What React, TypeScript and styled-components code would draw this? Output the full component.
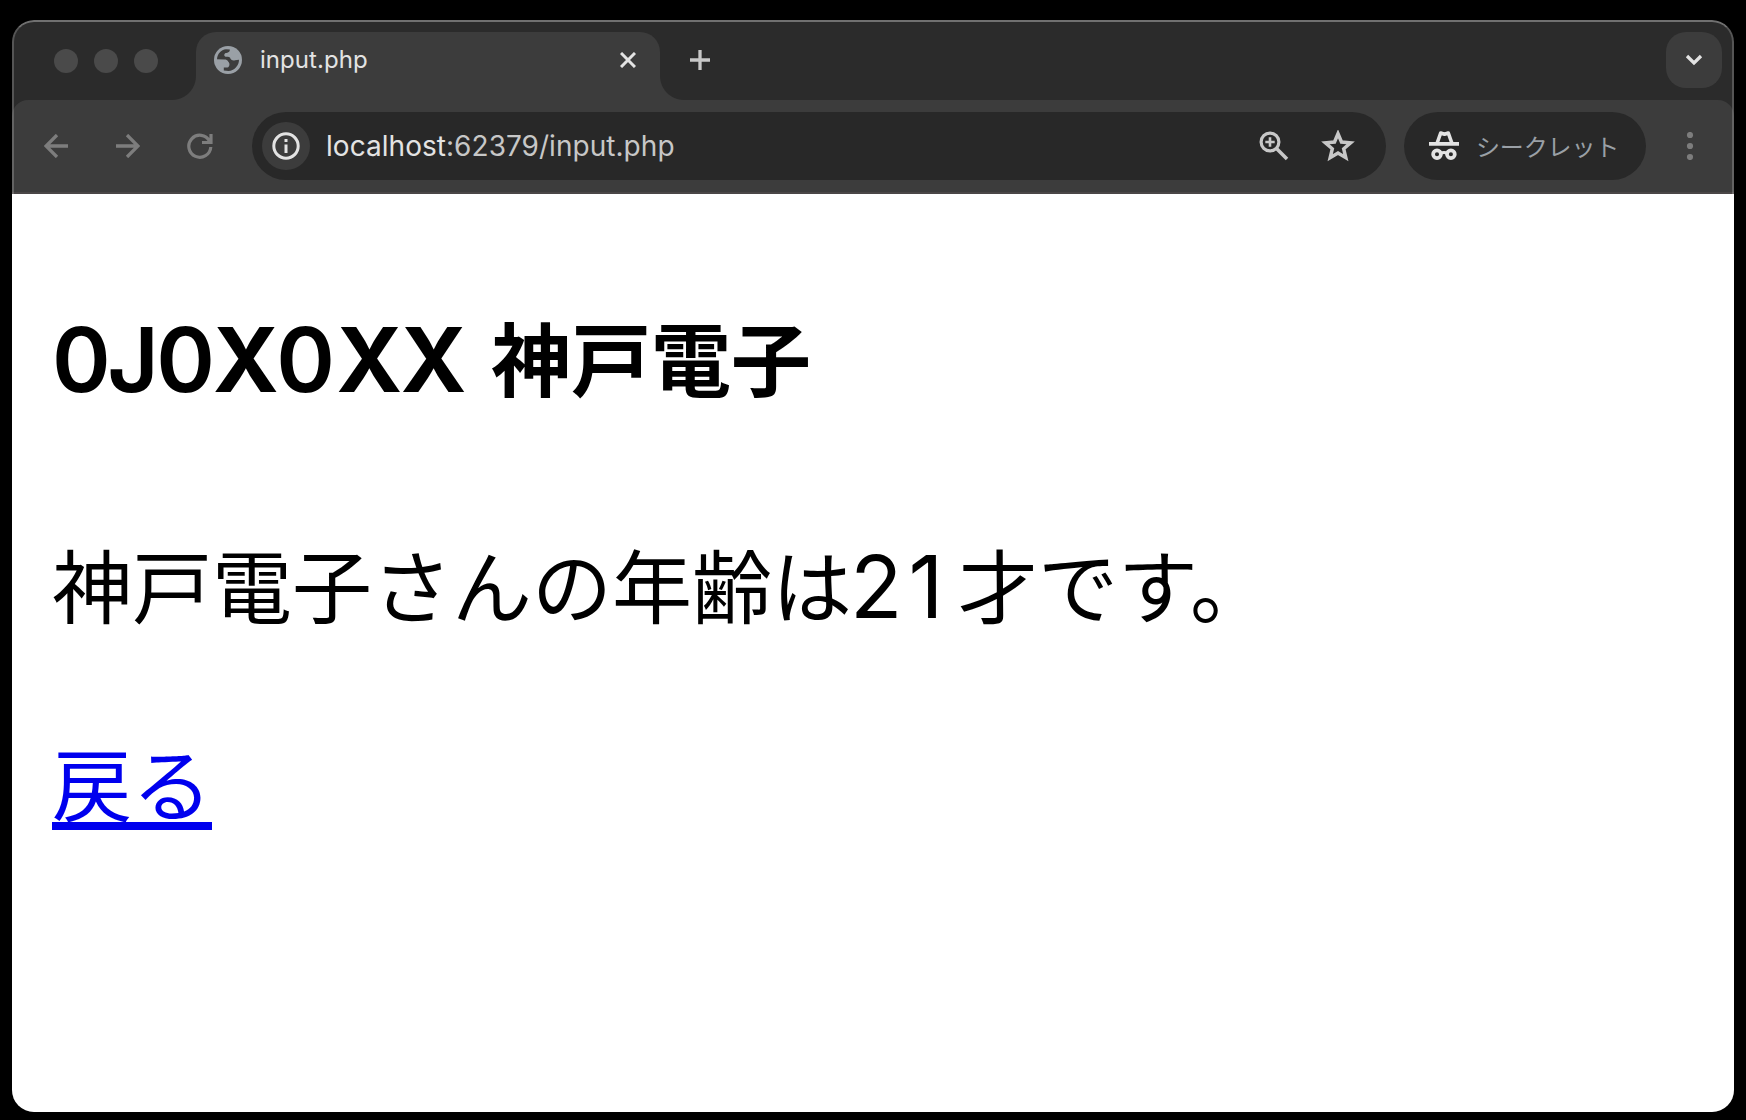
import React from "react";
import styled, { createGlobalStyle } from "styled-components";

const Global = createGlobalStyle`
  * { box-sizing: border-box; }
  html, body { margin: 0; background: #000; }
  svg { display: block; flex: none; }
`;

const Desktop = styled.div`
  width: 1746px;
  height: 1120px;
  padding: 20px 12px 8px;
  background: #000;
  font-family: Inter, "Noto Sans CJK JP", sans-serif;
`;

const Window = styled.div`
  position: relative;
  width: 100%;
  height: 100%;
  display: flex;
  flex-direction: column;
  border-radius: 22px;
  overflow: hidden;
  background: #2b2b2b;
`;

const Rim = styled.div`
  position: absolute;
  inset: 0 0 auto 0;
  height: 174px;
  border: 2px solid rgba(255, 255, 255, 0.2);
  border-top-color: rgba(255, 255, 255, 0.33);
  border-bottom: 0;
  border-radius: 22px 22px 0 0;
  pointer-events: none;
`;

const TabStrip = styled.div`
  height: 80px;
  flex: none;
  display: flex;
  padding: 12px 12px 0 42px;
`;

const Lights = styled.div`
  display: flex;
  gap: 16px;
  padding-top: 17px;
  width: 142px;
`;

const Light = styled.span`
  width: 24px;
  height: 24px;
  border-radius: 50%;
  background: #4a4a4a;
`;

const Tab = styled.div`
  position: relative;
  width: 464px;
  height: 68px;
  display: flex;
  align-items: center;
  padding: 0 24px 12px 18px;
  border-radius: 20px 20px 0 0;
  background: #3c3c3c;
  &::before, &::after {
    content: "";
    position: absolute;
    bottom: 0;
    width: 24px;
    height: 24px;
  }
  &::before {
    left: -24px;
    background: radial-gradient(circle at 0 0, transparent 23.5px, #3c3c3c 24.5px);
  }
  &::after {
    right: -24px;
    background: radial-gradient(circle at 100% 0, transparent 23.5px, #3c3c3c 24.5px);
  }
`;

const TabTitle = styled.span`
  flex: 1;
  margin-left: 18px;
  font-size: 24px;
  line-height: 30px;
  letter-spacing: 0.05px;
  color: #e3e3e3;
`;

const NewTab = styled.div`
  margin: 18px 0 0 30px;
  height: 20px;
`;

const TabSearch = styled.div`
  width: 56px;
  height: 56px;
  margin-left: auto;
  border-radius: 20px;
  display: grid;
  place-items: center;
  background: #3c3c3c;
`;

const Toolbar = styled.div`
  height: 94px;
  flex: none;
  display: flex;
  align-items: flex-start;
  padding: 12px 34px 0 30px;
  border-radius: 16px 16px 0 0;
  border-bottom: 2px solid #4a4647;
  background: #3c3c3c;
`;

const Nav = styled.div`
  width: 210px;
  height: 68px;
  display: flex;
  align-items: center;
  gap: 47.5px;
  padding-left: 2px;
`;

const Pill = styled.div<{ $width: number }>`
  width: ${(p) => p.$width}px;
  height: 68px;
  border-radius: 34px;
  display: flex;
  align-items: center;
  background: #282828;
`;

const Address = styled(Pill)`
  padding: 0 31px 0 10px;
`;

const Incognito = styled(Pill)`
  margin-left: 18px;
  padding-left: 24px;
`;

const InfoBadge = styled.div`
  width: 48px;
  height: 48px;
  border-radius: 50%;
  display: grid;
  place-items: center;
  background: #3c3c3c;
`;

const Url = styled.span`
  flex: 1;
  margin-left: 16px;
  font-size: 28px;
  line-height: 34px;
  letter-spacing: 0.04px;
  color: #c7c7c7;
`;

const Host = styled.span`
  color: #e3e3e3;
`;

const StarSlot = styled.div`
  display: flex;
  margin-left: 32px;
`;

const IncognitoLabel = styled.span`
  margin-left: 16px;
  font: 400 24px/34px "Noto Sans CJK JP", sans-serif;
  letter-spacing: -0.15px;
  white-space: nowrap;
  color: #9aa0a6;
`;

const Menu = styled.div`
  margin-left: auto;
  height: 68px;
  display: flex;
  align-items: center;
`;

const Page = styled.main`
  flex: 1;
  padding: 101px 40px 0;
  background: #fff;
  color: #000;
  font-family: "Noto Sans CJK JP", sans-serif;
`;

const Heading = styled.h1`
  margin: 0;
  height: 120px;
  font-size: 80px;
  line-height: 120px;
  font-weight: 700;
  white-space: nowrap;
`;

const StudentId = styled.span`
  display: inline-block;
  width: 439px;
  vertical-align: -2px;
  font-family: Inter, sans-serif;
  font-size: 89px;
  font-weight: 600;
`;

const Kern = styled.span<{ $by: number; $bold?: boolean }>`
  letter-spacing: ${(p) => p.$by}px;
  font-weight: ${(p) => (p.$bold ? 700 : "inherit")};
`;

const Message = styled.p`
  margin: 107px 0 0;
  height: 120px;
  font-size: 80px;
  line-height: 120px;
  font-weight: 400;
  white-space: nowrap;
`;

const Age = styled.span`
  display: inline-block;
  width: 108px;
  margin-left: -2px;
  vertical-align: -1px;
  font-family: Inter, sans-serif;
  font-size: 86px;
`;

const BackLink = styled.a`
  display: block;
  width: max-content;
  margin-top: 78px;
  font-size: 80px;
  line-height: 120px;
  color: #0000ee;
  text-decoration: underline;
  text-decoration-thickness: 8px;
  text-underline-offset: 7px;
  text-decoration-skip-ink: none;
`;

const Globe = () => (
  <svg width="28" height="28" viewBox="0 0 28 28">
    <circle cx="14" cy="14" r="14" fill="#9aa0a6" />
    <path
      fill="#3c3c3c"
      d="M3 13.200C3.300 8 7 3.800 12 3.300L15.800 3.400C16 6 14 6.500 11.500 7C9.800 8 9.800 10 11.500 10.800C13 10.500 15 10.500 16 11.500C16.500 14 19 14.800 21 14.200L25 13.800C25.200 19.500 20 25 14.500 25L9.800 24.600V21.500H13.500C15.800 21 16 17 14.500 16C13.500 14.200 12 13.600 10.500 13.600Z"
    />
  </svg>
);

const ArrowLeft = () => (
  <svg width="24" height="24" viewBox="0 0 24 24" fill="none" stroke="#7d7d7d" strokeWidth="3.300">
    <path d="M13 1 2 12l11 11M2 12h22" />
  </svg>
);

const ArrowRight = () => (
  <svg width="24" height="24" viewBox="0 0 24 24" fill="none" stroke="#7d7d7d" strokeWidth="3.300">
    <path d="m11 1 11 11-11 11M22 12H0" />
  </svg>
);

const Reload = () => (
  <svg width="26" height="26" viewBox="0 0 26 26" fill="none" stroke="#7d7d7d" strokeWidth="3.200">
    <path d="M22.500 8A11 11 0 1 0 23.800 14M24 1v8.500h-9" />
  </svg>
);

const Info = () => (
  <svg width="28" height="28" viewBox="0 0 28 28" fill="none" stroke="#e3e3e3" strokeWidth="3">
    <circle cx="14" cy="14" r="12.200" />
    <path d="M14 12.500v8.500M14 7v3" />
  </svg>
);

const ZoomIn = () => (
  <svg width="30" height="30" viewBox="0 0 30 30" fill="none" stroke="#c7c7c7" strokeWidth="3.200">
    <circle cx="11" cy="11" r="8.900" />
    <path d="m17.500 17.500 10.500 10.500" strokeWidth="3.600" />
    <path d="M11 6.300v9.400M6.300 11h9.400" strokeWidth="2.600" />
  </svg>
);

const Star = () => (
  <svg width="34" height="32" viewBox="0 0 34 32" fill="none" stroke="#c7c7c7" strokeWidth="3.500">
    <path d="m17 3.700 3.500 8.300 9.100.8-6.900 6 2.100 8.900-7.800-4.700-7.800 4.700 2.100-8.900-6.900-6 9.100-.8z" />
  </svg>
);

const Spy = () => (
  <svg width="32" height="30" viewBox="0 0 32 30" fill="none" stroke="#e3e3e3">
    <path d="M1 12.800h30" strokeWidth="3.700" />
    <path d="m8.800 13 3.900-11 3.800 1.300L20.300 2l3.900 11" strokeWidth="3.600" strokeLinejoin="round" />
    <circle cx="9" cy="23.200" r="3.900" strokeWidth="3.700" />
    <circle cx="22.900" cy="23.200" r="3.900" strokeWidth="3.700" />
    <path d="M12.500 22.500q3.500-2 7 0" strokeWidth="2.800" />
  </svg>
);

export default function App() {
  return (
    <>
      <Global />
      <Desktop>
        <Window>
          <TabStrip>
            <Lights>
              <Light />
              <Light />
              <Light />
            </Lights>
            <Tab>
              <Globe />
              <TabTitle>input.php</TabTitle>
              <svg width="16" height="16" viewBox="0 0 16 16" stroke="#e3e3e3" strokeWidth="3">
                <path d="m1 1 14 14M15 1 1 15" />
              </svg>
            </Tab>
            <NewTab>
              <svg width="20" height="20" viewBox="0 0 20 20" stroke="#c7c7c7" strokeWidth="3.300">
                <path d="M10 0v20M0 10h20" />
              </svg>
            </NewTab>
            <TabSearch>
              <svg width="18" height="12" viewBox="0 0 18 12" fill="none" stroke="#e3e3e3" strokeWidth="3.300">
                <path d="m2 2 7 7 7-7" />
              </svg>
            </TabSearch>
          </TabStrip>
          <Toolbar>
            <Nav>
              <ArrowLeft />
              <ArrowRight />
              <Reload />
            </Nav>
            <Address $width={1134}>
              <InfoBadge>
                <Info />
              </InfoBadge>
              <Url>
                <Host>localhost</Host>:62379/input.php
              </Url>
              <ZoomIn />
              <StarSlot>
                <Star />
              </StarSlot>
            </Address>
            <Incognito $width={242}>
              <Spy />
              <IncognitoLabel>シークレット</IncognitoLabel>
            </Incognito>
            <Menu>
              <svg width="20" height="28" viewBox="0 0 20 28" fill="#7d7d7d">
                <circle cx="10" cy="3" r="3.100" />
                <circle cx="10" cy="14" r="3.100" />
                <circle cx="10" cy="25" r="3.100" />
              </svg>
            </Menu>
          </Toolbar>
          <Page>
            <Heading>
              <StudentId>
                <Kern $by={-3.5}>0</Kern>
                <Kern $by={-2.5}>J</Kern>
                <Kern $by={-2}>0</Kern>
                <Kern $by={-2.4} $bold>X</Kern>
                <Kern $by={1.5}>0</Kern>
                <Kern $by={-1.5} $bold>XX</Kern>
              </StudentId>
              神戸電子
            </Heading>
            <Message>
              神戸電子さんの年齢は
              <Age>
                <Kern $by={6}>2</Kern>1
              </Age>
              才です。
            </Message>
            <BackLink>戻る</BackLink>
          </Page>
          <Rim />
        </Window>
      </Desktop>
    </>
  );
}
